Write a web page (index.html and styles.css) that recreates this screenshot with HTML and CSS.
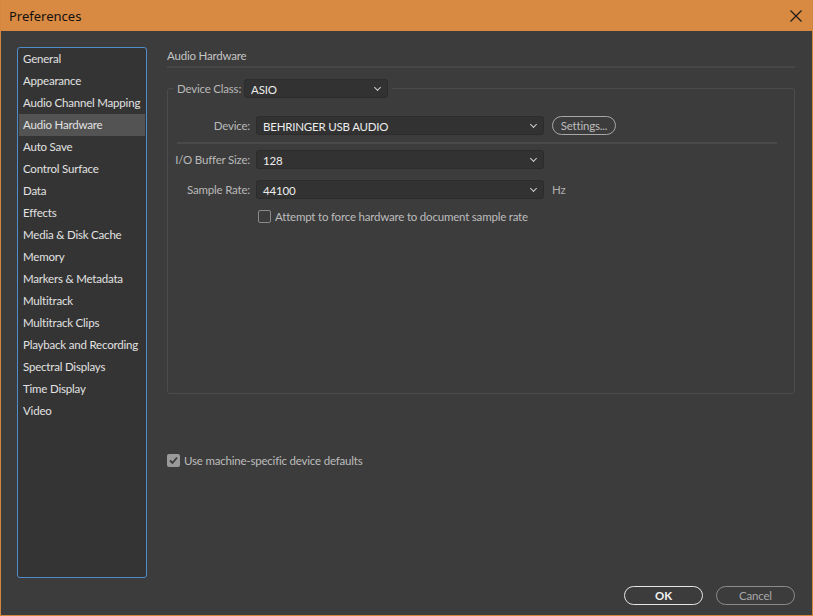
FILE: index.html
```html
<!DOCTYPE html>
<html lang="en">
<head>
    <meta charset="UTF-8">
    <title>Preferences</title>
    <link rel="stylesheet" href="styles.css">
</head>
<body>
    <div class="window">
        <div class="titlebar">
            <span class="title">Preferences</span>
            <svg class="close" width="12" height="12" viewBox="0 0 12 12">
                <path d="M0.5 0.5 L11.5 11.5 M11.5 0.5 L0.5 11.5" stroke="#1a1a1a" stroke-width="1.2" fill="none"/>
            </svg>
        </div>

        <div class="main">
            <ul class="sidebar">
                <li>General</li>
                <li>Appearance</li>
                <li>Audio Channel Mapping</li>
                <li class="active">Audio Hardware</li>
                <li>Auto Save</li>
                <li>Control Surface</li>
                <li>Data</li>
                <li>Effects</li>
                <li>Media &amp; Disk Cache</li>
                <li>Memory</li>
                <li>Markers &amp; Metadata</li>
                <li>Multitrack</li>
                <li>Multitrack Clips</li>
                <li>Playback and Recording</li>
                <li>Spectral Displays</li>
                <li>Time Display</li>
                <li>Video</li>
            </ul>

            <div class="content">
                <div class="section-title">Audio Hardware</div>

                <fieldset class="group">
                    <legend class="legend">
                        <span class="label">Device Class:</span>
                        <div class="select select-class">ASIO<span class="chev"></span></div>
                    </legend>

                    <div class="rows rows-top">
                        <span class="label">Device:</span>
                        <div class="select">BEHRINGER USB AUDIO<span class="chev"></span></div>
                        <button class="pill settings">Settings...</button>
                    </div>

                    <div class="separator"></div>

                    <div class="rows">
                        <span class="label">I/O Buffer Size:</span>
                        <div class="select">128<span class="chev"></span></div>
                        <span></span>

                        <span class="label">Sample Rate:</span>
                        <div class="select">44100<span class="chev"></span></div>
                        <span class="unit">Hz</span>
                    </div>

                    <label class="check check-force"><span class="box"></span>Attempt to force hardware to document sample rate</label>
                </fieldset>

                <label class="check check-defaults">
                    <span class="box checked">
                        <svg width="11" height="11" viewBox="0 0 11 11"><path d="M2 5.5 L4.5 8 L9 2.5" stroke="#3a3a3a" stroke-width="1.8" fill="none"/></svg>
                    </span>Use machine-specific device defaults
                </label>
            </div>
        </div>

        <div class="footer">
            <button class="pill ok">OK</button>
            <button class="pill cancel">Cancel</button>
        </div>
    </div>
</body>
</html>
```

FILE: styles.css
```css
body {
    margin: 0;
    font-family: Lato, "Noto Sans", sans-serif;
    font-size: 11.5px;
    letter-spacing: -0.2px;
    background: #3c3c3c;
}
.window {
    width: 813px;
    height: 616px;
    box-sizing: border-box;
    background: #3c3c3c;
    border: 1px solid #d5863e;
    border-top: none;
    display: flex;
    flex-direction: column;
}
.titlebar {
    height: 31px;
    flex-shrink: 0;
    background: #d98a42;
    display: flex;
    align-items: center;
    justify-content: space-between;
    padding: 0 10px 0 8px;
}
.title {
    font-family: "Segoe UI", "Noto Sans", sans-serif;
    font-size: 13px;
    letter-spacing: 0;
    color: #111;
}
.close {
    display: block;
}
.main {
    flex: 1;
    display: flex;
    gap: 20px;
    padding: 16px 17px 0 16px;
    min-height: 0;
}
.sidebar {
    list-style: none;
    margin: 0;
    padding: 0;
    width: 128px;
    flex-shrink: 0;
    border: 1px solid #4e8ccb;
    border-radius: 3px;
    background: #343434;
}
.sidebar li {
    height: 22px;
    line-height: 22px;
    padding-left: 4px;
    margin: 0 1px;
    color: #e2e2e2;
    white-space: nowrap;
}
.sidebar li.active {
    background: #535353;
}
.content {
    flex: 1;
    display: flex;
    flex-direction: column;
}
.section-title {
    height: 19px;
    line-height: 18px;
    color: #c4c4c4;
    border-bottom: 2px solid #474747;
}
.group {
    margin: 11px 0 0;
    padding: 0 0 170px;
    border: 1px solid #4c4c4c;
    border-radius: 3px;
    min-width: 0;
}
.legend {
    margin-left: 5px;
    padding: 0 4px;
    display: flex;
    align-items: center;
    gap: 3px;
}
.label {
    color: #b9b9b9;
    text-align: right;
    white-space: nowrap;
}
.select {
    position: relative;
    height: 19px;
    line-height: 19px;
    box-sizing: border-box;
    background: #323232;
    border: 1px solid #2c2c2c;
    border-radius: 3px;
    padding-left: 6px;
    color: #ececec;
}
.select-class {
    width: 144px;
}
.chev {
    position: absolute;
    right: 7px;
    top: 5px;
    width: 4px;
    height: 4px;
    border-right: 1px solid #d0d0d0;
    border-bottom: 1px solid #d0d0d0;
    transform: rotate(45deg);
}
.rows {
    display: grid;
    grid-template-columns: 82px 288px auto;
    column-gap: 6px;
    row-gap: 11px;
    align-items: center;
}
.rows > :nth-child(3n) {
    margin-left: 2px;
    justify-self: start;
}
.rows-top {
    margin-top: 18px;
}
.separator {
    height: 2px;
    background: #4a4a4a;
    margin: 7px 17px 6px 9px;
}
.unit {
    color: #b0b0b0;
}
.pill {
    font-family: inherit;
    font-size: 11.5px;
    letter-spacing: -0.2px;
    background: transparent;
    border: 1.5px solid #a8a8a8;
    border-radius: 10px;
    color: #bdbdbd;
    height: 19px;
    padding: 0;
    cursor: pointer;
}
.settings {
    width: 64px;
}
.check {
    display: flex;
    align-items: center;
    gap: 4px;
    color: #bcbcbc;
    white-space: nowrap;
}
.check-force {
    margin: 11px 0 0 90px;
}
.box {
    flex-shrink: 0;
    width: 13px;
    height: 13px;
    box-sizing: border-box;
    border: 1px solid #8a8a8a;
    border-radius: 2px;
    display: flex;
    align-items: center;
    justify-content: center;
}
.box.checked {
    width: 13px;
    height: 13px;
    background: #9a9a9a;
    border: none;
}
.check-defaults {
    margin-top: 60px;
}
.footer {
    display: flex;
    justify-content: flex-end;
    gap: 13px;
    padding: 8px 17px 10px 0;
}
.ok,
.cancel {
    width: 79px;
}
.ok {
    border-color: #e6e6e6;
    color: #f2f2f2;
    font-weight: bold;
}
.cancel {
    border-color: #8c8c8c;
    color: #a8a8a8;
}
```
